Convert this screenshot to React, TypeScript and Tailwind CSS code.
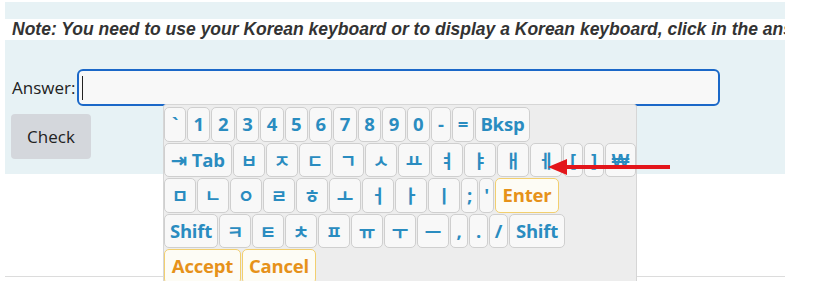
import React from "react";

type K = { l: string; w: string; o?: boolean; ko?: boolean };

const rows: K[][] = [
  [
    { l: "`", w: "w-[22px]" },
    { l: "1", w: "w-[23.4px]" },
    { l: "2", w: "w-[23.4px]" },
    { l: "3", w: "w-[23.4px]" },
    { l: "4", w: "w-[23.4px]" },
    { l: "5", w: "w-[23.4px]" },
    { l: "6", w: "w-[23.4px]" },
    { l: "7", w: "w-[23.4px]" },
    { l: "8", w: "w-[23.4px]" },
    { l: "9", w: "w-[23.4px]" },
    { l: "0", w: "w-[23.4px]" },
    { l: "-", w: "w-[20px]" },
    { l: "=", w: "w-[22px]" },
    { l: "Bksp", w: "w-[55px]" },
  ],
  [
    { l: "⇥ Tab", w: "w-[68px]" },
    { l: "ㅂ", w: "w-[32px]", ko: true },
    { l: "ㅈ", w: "w-[32px]", ko: true },
    { l: "ㄷ", w: "w-[32px]", ko: true },
    { l: "ㄱ", w: "w-[32px]", ko: true },
    { l: "ㅅ", w: "w-[32px]", ko: true },
    { l: "ㅛ", w: "w-[32px]", ko: true },
    { l: "ㅕ", w: "w-[32px]", ko: true },
    { l: "ㅑ", w: "w-[32px]", ko: true },
    { l: "ㅐ", w: "w-[32px]", ko: true },
    { l: "ㅔ", w: "w-[32px]", ko: true },
    { l: "[", w: "w-[20px]" },
    { l: "]", w: "w-[20px]" },
    { l: "₩", w: "w-[31px]" },
  ],
  [
    { l: "ㅁ", w: "w-[32px]", ko: true },
    { l: "ㄴ", w: "w-[32px]", ko: true },
    { l: "ㅇ", w: "w-[32px]", ko: true },
    { l: "ㄹ", w: "w-[32px]", ko: true },
    { l: "ㅎ", w: "w-[32px]", ko: true },
    { l: "ㅗ", w: "w-[32px]", ko: true },
    { l: "ㅓ", w: "w-[32px]", ko: true },
    { l: "ㅏ", w: "w-[32px]", ko: true },
    { l: "ㅣ", w: "w-[32px]", ko: true },
    { l: ";", w: "w-[17px]" },
    { l: "'", w: "w-[15px]" },
    { l: "Enter", w: "w-[64px]", o: true },
  ],
  [
    { l: "Shift", w: "w-[54px]" },
    { l: "ㅋ", w: "w-[32px]", ko: true },
    { l: "ㅌ", w: "w-[32px]", ko: true },
    { l: "ㅊ", w: "w-[32px]", ko: true },
    { l: "ㅍ", w: "w-[32px]", ko: true },
    { l: "ㅠ", w: "w-[32px]", ko: true },
    { l: "ㅜ", w: "w-[32px]", ko: true },
    { l: "ㅡ", w: "w-[32px]", ko: true },
    { l: ",", w: "w-[18px]" },
    { l: ".", w: "w-[19px]" },
    { l: "/", w: "w-[19px]" },
    { l: "Shift", w: "w-[56px]" },
  ],
  [
    { l: "Accept", w: "w-[77px]", o: true },
    { l: "Cancel", w: "w-[74px]", o: true },
  ],
];

function keyClass(k: K) {
  const base =
    "flex h-[34.5px] shrink-0 items-center justify-center rounded-[5px] border leading-none ";
  const color = k.o
    ? "border-[#f2cf6f] bg-[#fdfcf5] text-[#e6921a] "
    : "border-[#cfcfcf] bg-[#f8f8f8] text-[#2a8cc0] ";
  return base + color + k.w;
}

function Key({ k }: { k: K }) {
  return (
    <div className={keyClass(k)}>
      <span
        className={
          k.ko
            ? "font-['Noto_Sans_CJK_KR',sans-serif] text-[18px] font-bold"
            : "font-['Open_Sans',sans-serif] text-[18.5px] font-bold tracking-[-0.2px]"
        }
      >
        {k.l}
      </span>
    </div>
  );
}

export default function App() {
  return (
    <div className="relative h-[281px] w-[813px] overflow-hidden bg-white">
      <div className="ml-[5px] mt-[2px] h-[172px] w-[780px] bg-[#e7f2f5]">
        <div className="pt-[17px]">
          <div className="h-[21px] overflow-hidden whitespace-nowrap bg-white pl-[7px] font-['Liberation_Sans',sans-serif] text-[17.5px] font-bold italic leading-[21px] text-[#333333]">
            Note: You need to use your Korean keyboard or to display a Korean keyboard, click in the answer box.
          </div>
        </div>
        <div className="mt-[29px] flex items-center pl-[7px]">
          <span className="font-['Open_Sans',sans-serif] text-[17px] text-[#222]">Answer:</span>
          <div className="ml-[2px] flex h-[37px] w-[643px] items-center rounded-[6px] border-2 border-[#1b68c8] bg-[#f8f8f8] pl-[3px]">
            <span className="h-[24px] w-px bg-[#222]" />
          </div>
        </div>
        <div className="ml-[6px] mt-[8px] flex h-[45px] w-[80px] items-center justify-center rounded-[4px] bg-[#d4d7dc] font-['Open_Sans',sans-serif] text-[17px] text-[#222]">
          Check
        </div>
      </div>
      <div className="ml-[5px] mt-[102px] h-px w-[780px] bg-[#dcdcdc]" />

      <div className="absolute left-[163px] top-[104px] h-[200px] w-[474px] rounded-[3px] border border-[#d6d6d6] bg-[#ededed] pt-[2px]">
        <div className="flex flex-col gap-[1px]">
          {rows.map((r, i) => (
            <div key={i} className="flex gap-[1px]">
              {r.map((k, j) => (
                <Key key={j} k={k} />
              ))}
            </div>
          ))}
        </div>
      </div>

      <svg className="absolute left-0 top-0" width="813" height="281" viewBox="0 0 813 281">
        <line x1="562" y1="167" x2="670" y2="167" stroke="#e3161b" strokeWidth="4" />
        <polygon points="548,167 567,159 567,175" fill="#e3161b" />
      </svg>
    </div>
  );
}
